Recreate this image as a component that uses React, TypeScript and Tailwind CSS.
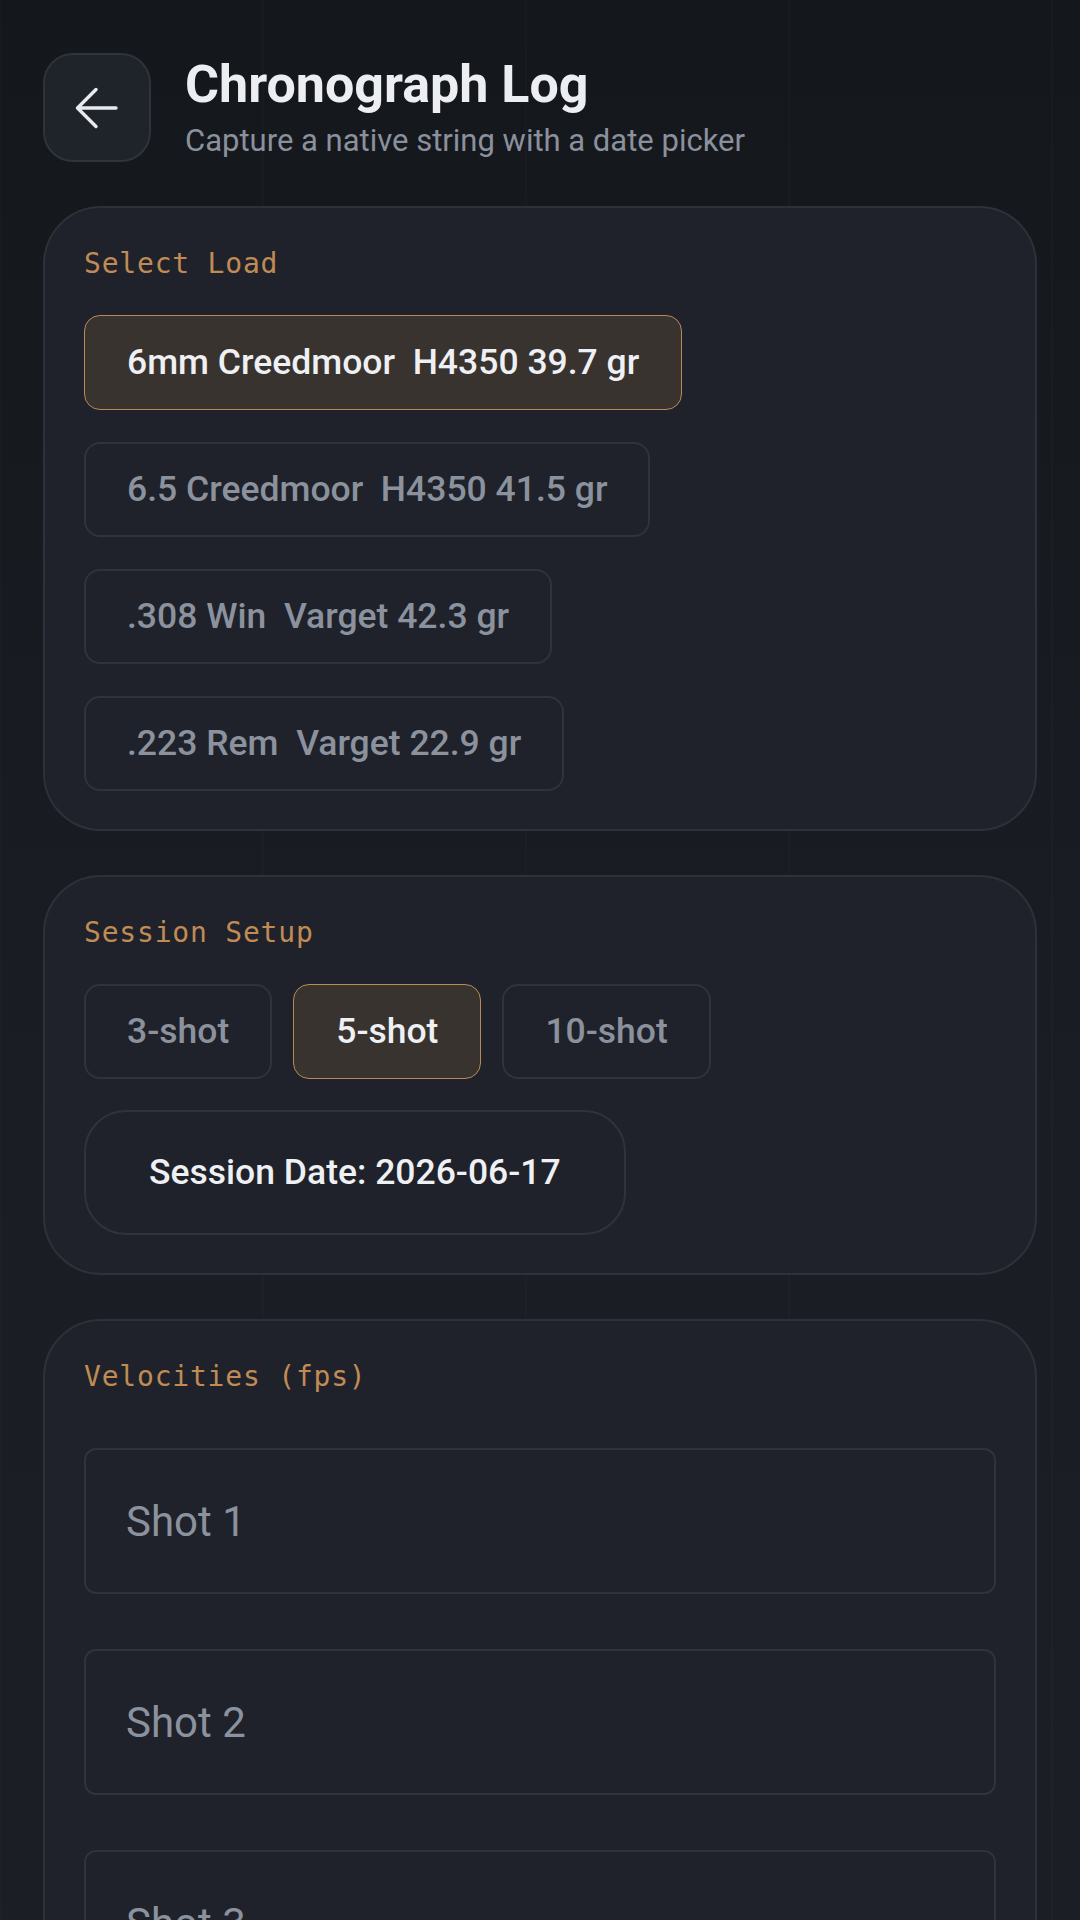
import React from "react";

const loads = [
  { text: "6mm Creedmoor  H4350 39.7 gr", selected: true },
  { text: "6.5 Creedmoor  H4350 41.5 gr", selected: false },
  { text: ".308 Win  Varget 42.3 gr", selected: false },
  { text: ".223 Rem  Varget 22.9 gr", selected: false },
];

const shots = [
  { text: "3-shot", selected: false },
  { text: "5-shot", selected: true },
  { text: "10-shot", selected: false },
];

function Label({ children }: { children: React.ReactNode }) {
  return (
    <div className="font-['DejaVu_Sans_Mono',monospace] text-[28px] leading-[40px] tracking-[0.8px] text-[#c08b55]">
      {children}
    </div>
  );
}

function Chip({ text, selected }: { text: string; selected: boolean }) {
  return (
    <button
      type="button"
      className={
        selected
          ? "h-[95px] rounded-2xl border border-[#b98a55] bg-[#38332f] px-[42px] text-[35.5px] font-medium whitespace-pre text-[#eef0f3]"
          : "h-[95px] rounded-2xl border-2 border-[#2e333c] bg-[#1f222a] px-[41px] text-[35.5px] font-medium whitespace-pre text-[#8b929d]"
      }
    >
      {text}
    </button>
  );
}

export default function App() {
  return (
    <div className="min-h-[1920px] w-[1080px] overflow-hidden font-['Roboto',sans-serif] [background-image:linear-gradient(90deg,rgba(255,255,255,0.012)_2px,transparent_2px),linear-gradient(180deg,#14171c_0%,#1a1d23_45%,#1c1f26_100%)] [background-size:263px_100%,100%_100%] [background-position:-1px_0,0_0] px-[43px] pt-[53px] pb-[60px]">
      <header className="flex items-center gap-[34px]">
        <button
          type="button"
          className="flex h-[109px] w-[108px] shrink-0 items-center justify-center rounded-[30px] border-2 border-[#2e333c] bg-[#1f232a]"
        >
          <svg width="44" height="42" viewBox="0 0 44 42" fill="none">
            <path
              d="M21 2.5 L2.5 21 L21 39.5 M2.5 21 H41"
              stroke="#e8eaee"
              strokeWidth="3.4"
              strokeLinecap="round"
              strokeLinejoin="round"
            />
          </svg>
        </button>
        <div className="flex flex-col">
          <h1 className="text-[52px] font-bold leading-[58px] text-[#eceef2]">Chronograph Log</h1>
          <p className="mt-[8px] text-[31px] leading-[38px] text-[#8a919c]">
            Capture a native string with a date picker
          </p>
        </div>
      </header>

      <main className="mt-[44px] flex flex-col gap-[44px]">
        <section className="rounded-[58px] border-2 border-[#2c313a] bg-[#1f222a] px-[39px] pt-[36px] pb-[38px]">
          <Label>Select Load</Label>
          <div className="mt-[31px] flex flex-col items-start gap-[32px]">
            {loads.map((l) => (
              <Chip key={l.text} text={l.text} selected={l.selected} />
            ))}
          </div>
        </section>

        <section className="rounded-[58px] border-2 border-[#2c313a] bg-[#1f222a] px-[39px] pt-[36px] pb-[38px]">
          <Label>Session Setup</Label>
          <div className="mt-[31px] flex gap-[21px]">
            {shots.map((s) => (
              <Chip key={s.text} text={s.text} selected={s.selected} />
            ))}
          </div>
          <button
            type="button"
            className="mt-[31px] h-[125px] rounded-[42px] border-2 border-[#2e333c] bg-[#1f222a] px-[63px] text-[35.5px] font-medium text-[#eef0f3]"
          >
            Session Date: 2026-06-17
          </button>
        </section>

        <section className="rounded-[58px] border-2 border-[#2c313a] bg-[#1f222a] px-[39px] pt-[36px] pb-[40px]">
          <Label>Velocities (fps)</Label>
          <div className="mt-[51px] flex flex-col gap-[55px]">
            {[1, 2, 3, 4, 5].map((n) => (
              <input
                key={n}
                type="text"
                placeholder={`Shot ${n}`}
                className="h-[146px] w-full rounded-xl border-2 border-[#2e333c] bg-transparent px-[40px] text-[42px] text-[#eef0f3] outline-none placeholder:text-[#8b929d]"
              />
            ))}
          </div>
        </section>
      </main>
    </div>
  );
}
